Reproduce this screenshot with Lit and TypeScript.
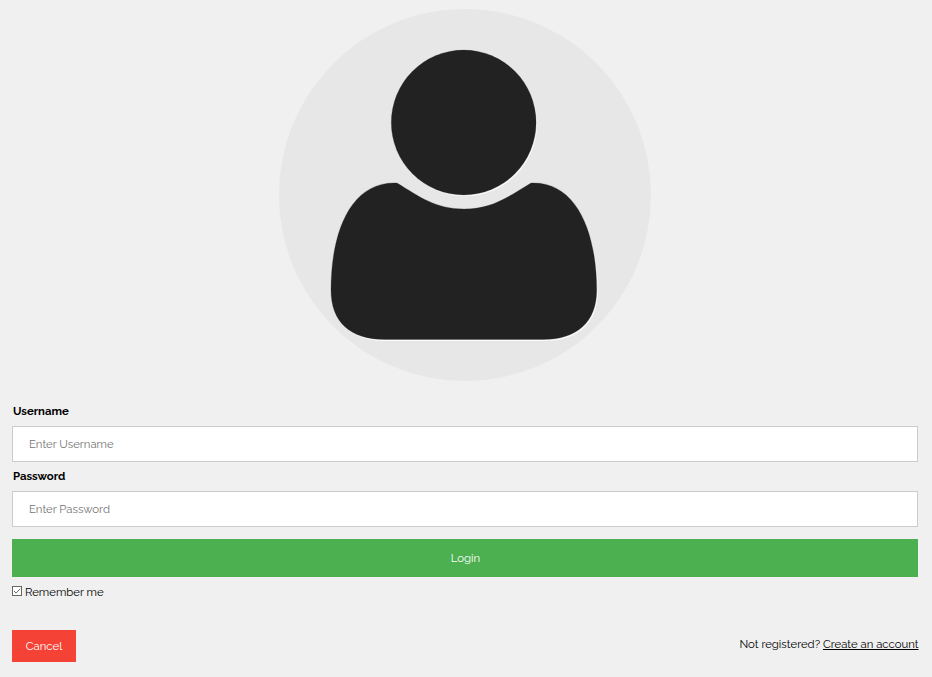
import { LitElement, html, css } from "lit";
import { customElement } from "lit/decorators.js";

@customElement("user-avatar")
class UserAvatar extends LitElement {
  static styles = css`
    :host { display: block; width: 372px; height: 372px; }
    .art { display: block; }
  `;
  render() {
    return html`
      <svg class="art" width="372" height="372" viewBox="279 9 372 372" role="img" aria-label="Avatar">
        <defs>
          <filter id="soft" x="-5%" y="-5%" width="110%" height="110%"><feGaussianBlur stdDeviation="0.6" /></filter>
          <g id="person">
            <circle cx="463.7" cy="122.5" r="72.4" />
            <path d="M397 183C350 181 331 233 331 290C331 322 350 339.5 385 339.5H543C577 339.5 596.7 322 596.7 290C596.7 233 577 181 531 183C508 197 492 209 464 209C436 209 420 197 397 183Z" />
          </g>
        </defs>
        <circle cx="465" cy="195" r="186" fill="#e7e7e7" />
        <use href="#person" fill="#fafafa" transform="translate(1.1 1.4)" filter="url(#soft)" />
        <use href="#person" fill="#222" stroke="#222" stroke-opacity="0.35" stroke-width="0.7" />
      </svg>
    `;
  }
}

@customElement("app-root")
class AppRoot extends LitElement {
  static styles = css`
    :host {
      display: block;
      box-sizing: border-box;
      height: 677px;
      padding: 9px 14px 0 12px;
      background: #f0f0f0;
      color: #000;
      font: 11.3333px/14px Raleway, Lato, "Open Sans", sans-serif;
    }
    .portrait { display: flex; justify-content: center; margin-bottom: 23px; }
    .label { display: block; height: 14px; padding-left: 1px; font-weight: 700; }
    .field {
      display: block;
      box-sizing: border-box;
      width: 100%;
      height: 36px;
      margin: 8px 0 7px;
      padding: 0 16px;
      border: 1px solid #ccc;
      border-radius: 0;
      background: #fff;
      font: inherit;
      outline: none;
    }
    .field::placeholder { color: #757575; opacity: 1; }
    .button { border: 0; padding: 0; color: #fff; font: inherit; }
    .login { display: block; width: 100%; height: 38px; margin-top: 12px; padding-left: 1px; background: #4caf50; }
    .remember {
      display: flex;
      align-items: center;
      gap: 3px;
      height: 14px;
      margin-top: 8px;
    }
    .check { display: block; margin-top: -2px; }
    .footer { display: flex; justify-content: space-between; margin-top: 31px; }
    .cancel { width: 64px; height: 32px; background: #f44336; }
    .signup { padding-top: 7px; margin-right: -0.5px; }
    .link { color: inherit; text-decoration: underline; }
  `;
  render() {
    return html`
      <div class="portrait"><user-avatar></user-avatar></div>
      <label class="label">Username</label>
      <input class="field" type="text" placeholder="Enter Username" />
      <label class="label">Password</label>
      <input class="field" type="password" placeholder="Enter Password" />
      <button class="button login">Login</button>
      <div class="remember">
        <svg class="check" width="10" height="10" viewBox="0 0 10 10" role="checkbox" aria-checked="true">
          <rect x="0.5" y="0.5" width="9" height="9" fill="#fff" stroke="#666" />
          <path d="M2 5L4.1 7.1L8.2 2.8" fill="none" stroke="#555" stroke-width="0.9" />
        </svg>
        <span>Remember me</span>
      </div>
      <div class="footer">
        <button class="button cancel">Cancel</button>
        <div class="signup">Not registered? <a class="link">Create an account</a></div>
      </div>
    `;
  }
}
